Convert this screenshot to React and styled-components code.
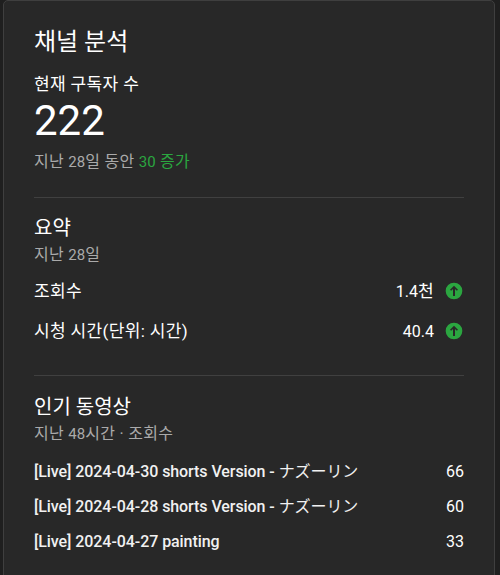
import React from "react";
import styled, { createGlobalStyle } from "styled-components";

const Global = createGlobalStyle`
  *, *::before, *::after { box-sizing: border-box; }
  body { margin: 0; background: #1f1f1f; font-family: Roboto, "Noto Sans CJK KR", sans-serif; color: #fff; overflow: hidden; }
`;

const Page = styled.main`
  height: 575px;
  padding: 0 5px 0 3px;
  overflow: hidden;
`;

const Card = styled.section`
  height: 600px;
  padding: 25px 30px 0;
  background: #282828;
  border: 1px solid #3f3f3f;
  border-radius: 5px;
`;

const Line = styled.div`
  height: ${(p) => p.$h}px;
  line-height: ${(p) => p.$h}px;
  font-size: ${(p) => p.$size || 15}px;
  margin-top: ${(p) => p.$gap || 0}px;
  color: ${(p) => (p.$muted ? "#aaa" : "#fff")};
  white-space: nowrap;
`;

const Ko = styled.span`
  font-size: 1.065em;
  letter-spacing: 0.02em;
  line-height: 1;
`;

const Kana = styled.span`
  font-family: "Noto Sans CJK JP", sans-serif;
  font-weight: 400;
  line-height: 1;
`;

const Gain = styled.span`
  color: #2ba640;
`;

const Divider = styled.hr`
  height: 1px;
  margin: ${(p) => p.$gap}px 0 0;
  border: 0;
  background: #404040;
`;

const Row = styled.div`
  display: flex;
  align-items: center;
  justify-content: space-between;
  height: ${(p) => p.$h}px;
  font-size: 16px;
  line-height: 24px;
  white-space: nowrap;
`;

const Label = styled.span`
  padding-top: 2px;
`;

const VideoTitle = styled.span`
  color: #f1f1f1;
  font-weight: 500;
  letter-spacing: -0.07px;
`;

const Value = styled.span`
  display: flex;
  align-items: center;
  gap: 10px;
`;

const Rows = styled.div`
  margin-top: ${(p) => p.$gap}px;
`;

function UpIcon() {
  return (
    <svg width="20" height="20" viewBox="0 0 24 24">
      <path fill="#2ba640" d="M12 2a10 10 0 1 0 0 20 10 10 0 0 0 0-20zm1.2 16h-2.4V9.6L8.6 11.8 7.2 10.4 12 5.6l4.8 4.8-1.4 1.4-2.2-2.2z" />
    </svg>
  );
}

const metrics = [
  { name: "조회수", value: "1.4", unit: "천" },
  { name: "시청 시간(단위: 시간)", value: "40.4" },
];

const videos = [
  { title: "[Live] 2024-04-30 shorts Version - ", kana: "ナズーリン", views: "66" },
  { title: "[Live] 2024-04-28 shorts Version - ", kana: "ナズーリン", views: "60" },
  { title: "[Live] 2024-04-27 painting", views: "33" },
];

export default function App() {
  return (
    <Page>
      <Global />
      <Card>
        <Line $h={32} $size={24}>채널 분석</Line>
        <Line $h={24} $size={16} $gap={15}><Ko>현재 구독자 수</Ko></Line>
        <Line $h={48} $size={42}>222</Line>
        <Line $h={24} $gap={5} $muted>
          <Ko>지난 </Ko>28<Ko>일 동안 </Ko><Gain>30<Ko> 증가</Ko></Gain>
        </Line>
        <Divider $gap={23} />
        <Line $h={28} $size={20} $gap={16}>요약</Line>
        <Line $h={24} $gap={1} $muted><Ko>지난 </Ko>28<Ko>일</Ko></Line>
        <Rows $gap={4}>
          {metrics.map((m) => (
            <Row key={m.name} $h={40}>
              <Label><Ko>{m.name}</Ko></Label>
              <Value>
                <Label>{m.value}{m.unit && <Ko>{m.unit}</Ko>}</Label>
                <UpIcon />
              </Value>
            </Row>
          ))}
        </Rows>
        <Divider $gap={24} />
        <Line $h={28} $size={20} $gap={17}>인기 동영상</Line>
        <Line $h={24} $gap={1} $muted><Ko>지난 </Ko>48<Ko>시간 · 조회수</Ko></Line>
        <Rows $gap={8}>
          {videos.map((v) => (
            <Row key={v.title} $h={35}>
              <VideoTitle>{v.title}{v.kana && <Kana>{v.kana}</Kana>}</VideoTitle>
              <Value>{v.views}</Value>
            </Row>
          ))}
        </Rows>
      </Card>
    </Page>
  );
}
